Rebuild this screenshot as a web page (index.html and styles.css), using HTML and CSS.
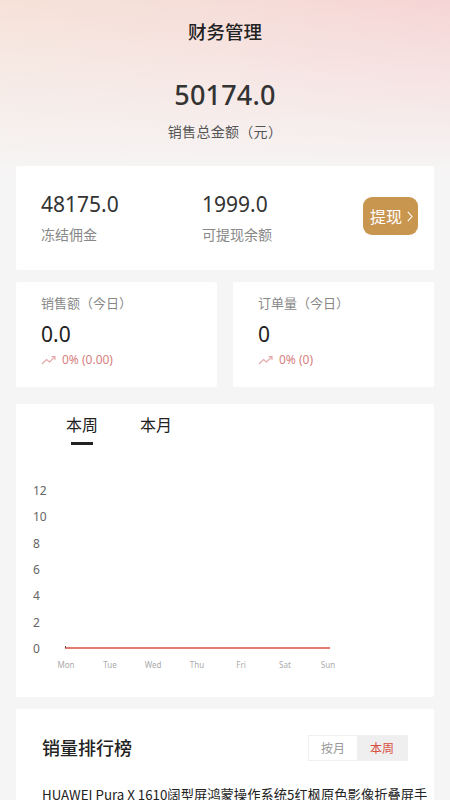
FILE: index.html
```html
<!DOCTYPE html>
<html lang="zh">
<head>
<meta charset="utf-8">
<title>财务管理</title>
<link rel="stylesheet" href="styles.css">
</head>
<body>
<div class="page">
  <header class="hero">
    <h1 class="title">财务管理</h1>
    <div class="total">50174.0</div>
    <div class="total-label">销售总金额（元）</div>
  </header>

  <section class="card balance">
    <div class="bal-col">
      <div class="bal-num">48175.0</div>
      <div class="bal-label">冻结佣金</div>
    </div>
    <div class="bal-col">
      <div class="bal-num">1999.0</div>
      <div class="bal-label">可提现余额</div>
    </div>
    <button class="withdraw">提现<svg class="chev" viewBox="0 0 6 11" width="6" height="11"><path d="M0.8 0.8 L5 5.5 L0.8 10.2" fill="none" stroke="#fff" stroke-width="1.1"/></svg></button>
  </section>

  <section class="today">
    <div class="card stat">
      <div class="stat-label">销售额（今日）</div>
      <div class="stat-num">0.0</div>
      <div class="stat-trend">
        <svg class="trend-ico" viewBox="0 0 16 10" width="16" height="10"><path d="M1 9 L5.5 4.5 L8.5 7 L14 1.5 M10.5 1.5 H14 V5" fill="none" stroke="#e3a6a6" stroke-width="1.1"/></svg>
        <span>0% (0.00)</span>
      </div>
    </div>
    <div class="card stat">
      <div class="stat-label">订单量（今日）</div>
      <div class="stat-num">0</div>
      <div class="stat-trend">
        <svg class="trend-ico" viewBox="0 0 16 10" width="16" height="10"><path d="M1 9 L5.5 4.5 L8.5 7 L14 1.5 M10.5 1.5 H14 V5" fill="none" stroke="#e3a6a6" stroke-width="1.1"/></svg>
        <span>0% (0)</span>
      </div>
    </div>
  </section>

  <section class="card chart-card">
    <div class="tabs">
      <div class="tab active">本周</div>
      <div class="tab">本月</div>
    </div>
    <svg class="chart" viewBox="0 0 418 245" width="418" height="245">
      <g class="ylab" font-size="12" fill="#666">
        <text x="17" y="50">12</text>
        <text x="17" y="76">10</text>
        <text x="17" y="103">8</text>
        <text x="17" y="129">6</text>
        <text x="17" y="155">4</text>
        <text x="17" y="182">2</text>
        <text x="17" y="208">0</text>
      </g>
      <line x1="49" y1="203" x2="314" y2="203" stroke="#d9503f" stroke-width="1.6"/>
      <line x1="49.5" y1="201" x2="49.5" y2="203" stroke="#7a3a30" stroke-width="1"/>
      <g class="xlab" font-size="8" fill="#aaa" text-anchor="middle">
        <text x="50" y="223">Mon</text>
        <text x="94" y="223">Tue</text>
        <text x="137" y="223">Wed</text>
        <text x="181" y="223">Thu</text>
        <text x="225" y="223">Fri</text>
        <text x="269" y="223">Sat</text>
        <text x="312" y="223">Sun</text>
      </g>
    </svg>
  </section>

  <section class="card rank">
    <div class="rank-head">
      <h2 class="rank-title">销量排行榜</h2>
      <div class="toggle">
        <span class="tg">按月</span>
        <span class="tg on">本周</span>
      </div>
    </div>
    <div class="product">HUAWEI Pura X 1610阔型屏鸿蒙操作系统5红枫原色影像折叠屏手机</div>
  </section>
</div>
</body>
</html>
```
FILE: styles.css
```css
* { box-sizing: border-box; }
html, body { margin: 0; padding: 0; }
html { height: 800px; overflow: hidden; }
body {
  background: #f6f5f5;
  font-family: "Noto Sans", "Noto Sans CJK SC", sans-serif;
  color: #333;
  width: 450px;
}
.page {
  display: flex;
  flex-direction: column;
  gap: 12px;
  padding: 0 16px 20px;
  background: linear-gradient(180deg, rgba(246,245,245,0) 0px, #f6f5f5 175px),
              linear-gradient(90deg, #f6e2d9 0%, #f6dcd8 55%, #f6d5d5 100%);
  background-repeat: no-repeat;
  background-size: 100% 180px, 100% 180px;
  background-color: #f6f5f5;
}
.hero {
  display: flex;
  flex-direction: column;
  align-items: center;
  padding-top: 19px;
  margin-bottom: 12px;
}
.title {
  margin: 0;
  font-size: 18.5px;
  font-weight: 500;
  line-height: 26px;
  color: #222;
}
.total {
  margin-top: 32px;
  font-size: 27px;
  line-height: 36px;
  font-weight: 500;
  color: #333;
  letter-spacing: 0.2px;
}
.total-label {
  margin-top: 9px;
  font-size: 14px;
  line-height: 20px;
  color: #555;
  letter-spacing: 0.3px;
}
.card {
  background: #fff;
  border-radius: 2px;
}
.balance {
  display: flex;
  align-items: center;
  height: 104px;
  padding: 0 16px 0 25px;
}
.bal-col {
  display: flex;
  flex-direction: column;
  width: 161px;
}
.bal-num {
  font-size: 21px;
  line-height: 28px;
  color: #333;
  margin-top: -2px;
}
.bal-label {
  margin-top: 7px;
  font-size: 14px;
  line-height: 20px;
  color: #888;
}
.withdraw {
  margin-left: auto;
  margin-top: -4px;
  width: 55px;
  height: 38px;
  border: none;
  border-radius: 9px;
  background: #c99650;
  color: #fff;
  font-family: "Noto Sans CJK SC", sans-serif;
  font-size: 16px;
  padding: 0 0 0 2px;
  display: flex;
  align-items: center;
  justify-content: center;
  gap: 5px;
}
.chev { display: block; }
.today {
  display: grid;
  grid-template-columns: 201px 201px;
  gap: 16px;
}
.stat {
  height: 105px;
  padding: 12px 25px 0;
  display: flex;
  flex-direction: column;
}
.stat-label {
  font-size: 13px;
  line-height: 18px;
  color: #888;
}
.stat-num {
  margin-top: 8px;
  font-size: 21px;
  line-height: 28px;
  color: #222;
}
.stat-trend {
  margin-top: 3px;
  display: flex;
  align-items: center;
  gap: 5px;
  font-size: 12px;
  line-height: 18px;
  color: #d67f80;
}
.trend-ico { display: block; }
.chart-card {
  margin-top: 5px;
  height: 293px;
  padding-top: 10px;
  display: flex;
  flex-direction: column;
}
.tabs {
  display: flex;
  gap: 42px;
  padding-left: 50px;
}
.tab {
  font-size: 16px;
  line-height: 22px;
  color: #222;
  padding-bottom: 9px;
  position: relative;
}
.tab.active::after {
  content: "";
  position: absolute;
  left: 5px;
  right: 5px;
  bottom: 0;
  height: 3px;
  background: #222;
}
.chart { display: block; }
.chart text { font-family: "Noto Sans", sans-serif; }
.rank {
  padding: 26px 26px 20px;
}
.rank-head {
  display: flex;
  align-items: center;
  justify-content: space-between;
}
.rank-title {
  margin: 0;
  font-size: 18px;
  line-height: 26px;
  font-weight: 500;
  color: #222;
}
.toggle {
  display: flex;
  background: #efefef;
  height: 26px;
  padding: 1px;
}
.tg {
  width: 48px;
  display: flex;
  align-items: center;
  justify-content: center;
  font-size: 12px;
  color: #999;
}
.tg:first-child { background: #fff; }
.tg.on { color: #d9503f; width: 50px; }
.product {
  margin-top: 23px;
  margin-right: -24px;
  font-family: "Noto Sans CJK SC", sans-serif;
  font-size: 13.3px;
  line-height: 22px;
  color: #222;
}
```
